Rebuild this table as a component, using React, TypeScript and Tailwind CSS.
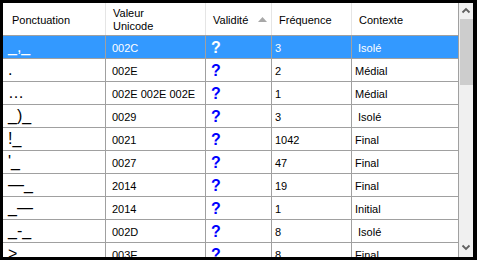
import React from 'react';

type Row = {
    punct: string;
    code: string;
    freq: string;
    ctx: string;
};

const rows: Row[] = [
    { punct: '_,_', code: '002C', freq: '3', ctx: ' Isolé' },
    { punct: '.', code: '002E', freq: '2', ctx: 'Médial' },
    { punct: '…', code: '002E 002E 002E', freq: '1', ctx: 'Médial' },
    { punct: '_)_', code: '0029', freq: '3', ctx: ' Isolé' },
    { punct: '!_', code: '0021', freq: '1042', ctx: 'Final' },
    { punct: "'_", code: '0027', freq: '47', ctx: 'Final' },
    { punct: '—_', code: '2014', freq: '19', ctx: 'Final' },
    { punct: '_—', code: '2014', freq: '1', ctx: 'Initial' },
    { punct: '_-_', code: '002D', freq: '8', ctx: ' Isolé' },
    { punct: '>', code: '003E', freq: '8', ctx: 'Final' },
];

const font = { fontFamily: '"Liberation Sans", Arial, sans-serif' };

export default function App() {
    return (
        <div
            className="w-[477px] h-[260px] bg-black pt-[3px] pl-[3px] pr-[4px] pb-[3px] flex overflow-hidden"
            style={font}
        >
            {/* Grille */}
            <div className="w-[456px] h-full bg-white overflow-hidden text-[11px] text-black">
                {/* En-tête */}
                <div className="flex h-[33px] border-b border-[#a0a0a0]">
                    <div className="w-[103px] border-r border-[#e5e5e5] flex items-center pt-[3px] pl-[9px]">
                        Ponctuation
                    </div>
                    <div className="w-[100px] border-r border-[#e5e5e5] flex items-center pt-[2px] pl-[7px] leading-[13px]">
                        <div>
                            Valeur
                            <br />
                            Unicode
                        </div>
                    </div>
                    <div className="w-[66px] border-r border-[#e5e5e5] flex items-center pt-[3px] pl-[7px] pr-[4px] justify-between">
                        <span>Validité</span>
                        <svg width="9" height="5" viewBox="0 0 9 5" className="mb-[3px]">
                            <polygon points="0,5 4.5,0 9,5" fill="#a8a8a8" />
                        </svg>
                    </div>
                    <div className="w-[80px] border-r border-[#e5e5e5] flex items-center pt-[3px] pl-[7px]">
                        Fréquence
                    </div>
                    <div className="w-[107px] border-r border-[#a0a0a0] flex items-center pt-[3px] pl-[7px]">
                        Contexte
                    </div>
                </div>

                {/* Lignes */}
                {rows.map((row, index) => {
                    const selected = index === 0;
                    return (
                        <div
                            key={index}
                            className={
                                selected
                                    ? 'flex h-[23px] border-b border-[#a0a0a0] bg-[#3399ff] text-white'
                                    : 'flex h-[23px] border-b border-[#a0a0a0]'
                            }
                        >
                            <div className="w-[103px] border-r border-[#a0a0a0] pl-[5px] text-[16px] leading-[22px] whitespace-pre">
                                {row.punct}
                            </div>
                            <div className="w-[100px] border-r border-[#a0a0a0] pl-[6px] pt-[3px] leading-[19px] whitespace-nowrap">
                                {row.code}
                            </div>
                            <div
                                className={
                                    selected
                                        ? 'w-[66px] border-r border-[#a0a0a0] pl-[5px] pt-[1px] text-[16px] font-bold leading-[21px] text-white'
                                        : 'w-[66px] border-r border-[#a0a0a0] pl-[5px] pt-[1px] text-[16px] font-bold leading-[21px] text-[#0000ff]'
                                }
                            >
                                ?
                            </div>
                            <div className="w-[80px] border-r border-[#a0a0a0] pl-[3px] pt-[3px] leading-[19px]">
                                {row.freq}
                            </div>
                            <div className="w-[107px] border-r border-[#a0a0a0] pl-[3px] pt-[3px] leading-[19px] whitespace-pre">
                                {row.ctx}
                            </div>
                        </div>
                    );
                })}
            </div>

            {/* Barre de défilement */}
            <div className="w-[14px] h-full bg-[#f0f0f0] flex flex-col">
                <div className="h-[16px] flex items-start justify-center">
                    <svg width="14" height="16" viewBox="0 0 14 16">
                        <polyline points="3.5,9.5 7,6 10.5,9.5" fill="none" stroke="#606060" strokeWidth="1.8" />
                    </svg>
                </div>
                <div className="h-[66px] ml-[1px] bg-[#cdcdcd]" />
                <div className="flex-1" />
                <div className="h-[16px] flex items-start justify-center">
                    <svg width="14" height="16" viewBox="0 0 14 16">
                        <polyline points="3.5,4.5 7,8 10.5,4.5" fill="none" stroke="#606060" strokeWidth="1.8" />
                    </svg>
                </div>
            </div>
        </div>
    );
}
